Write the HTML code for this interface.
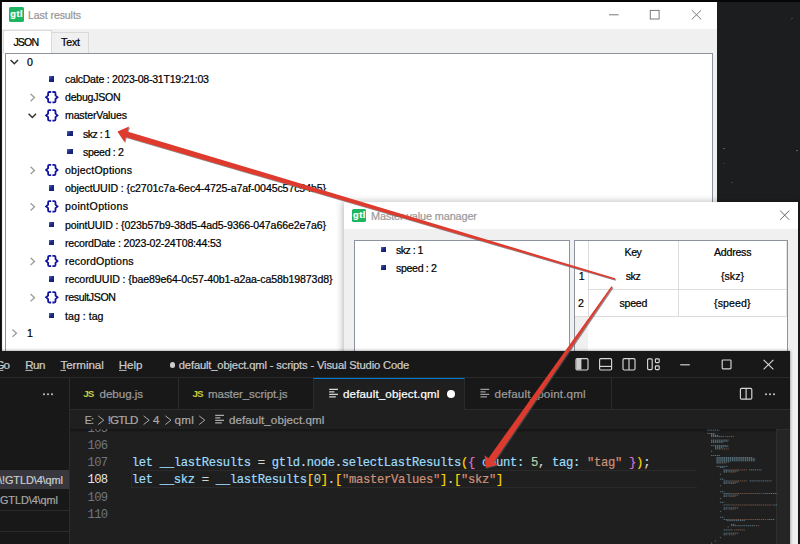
<!DOCTYPE html>
<html><head><meta charset="utf-8"><title>Last results</title>
<style>
html,body{margin:0;padding:0}
body{width:800px;height:544px;overflow:hidden;position:relative;background:#1b1d1e;font-family:"Liberation Sans",sans-serif}
div,span,i,svg{position:absolute;box-sizing:border-box}
.t{white-space:pre;line-height:16px;height:16px;-webkit-text-stroke:0.22px currentColor}
.br{font-weight:bold;color:#17178f;font-size:12px;letter-spacing:0.6px;line-height:16px}
.bu{width:5.4px;height:5.4px;background:linear-gradient(135deg,#5a6db8 0%,#1c2b85 45%,#101a6a 100%)}
.cl{left:131.7px;white-space:pre;font-family:"Liberation Mono",monospace;font-size:12.2px;letter-spacing:-0.31px;line-height:17px;height:17px;-webkit-text-stroke:0.2px currentColor}
.cl span{position:static}
.ln{left:83.2px;width:24.4px;text-align:right;font-family:"Liberation Mono",monospace;font-size:12.2px;letter-spacing:-0.6px;line-height:17px;height:17px;color:#6e7681}
.ln.cur{color:#e4e4e4}
</style></head><body>

<!-- wallpaper details -->
<div style="left:0;top:0;width:800px;height:1.6px;background:#060606"></div>
<div style="left:0;top:0;width:1.4px;height:360px;background:#0c0c0c"></div>
<div style="left:723px;top:148.2px;width:2.2px;height:1.2px;background:#6d6a45;border-radius:1px;transform:rotate(-20deg)"></div>
<div style="left:796px;top:150px;width:2.4px;height:1.2px;background:#77734a;border-radius:1px;transform:rotate(-20deg)"></div>
<div style="left:791.4px;top:18.2px;width:2.2px;height:1.1px;background:#4a4a4a;border-radius:1px;transform:rotate(-20deg)"></div>
<div style="left:730.6px;top:181.6px;width:2px;height:1.1px;background:#4a4a4a;border-radius:1px;transform:rotate(-20deg)"></div>
<div style="left:723px;top:163px;width:2px;height:1px;background:#3c3c3c;border-radius:1px;transform:rotate(-20deg)"></div>
<!-- ============ Last results window ============ -->
<div id="w1" style="left:2px;top:2px;width:715.4px;height:360px;background:#f0f0f0">
  <div style="left:0;top:0;width:100%;height:27.3px;background:#fff"></div>
  <div style="left:7.2px;top:5.2px;width:15.2px;height:14.6px;background:#1db560;border-radius:1.6px"></div>
  <!-- tabs -->
  <div style="left:49.4px;top:30.2px;width:37.4px;height:21px;background:#f0f0f0;border:1px solid #d9d9d9;border-bottom:none"></div>
  <div style="left:1px;top:28.2px;width:48.6px;height:24px;background:#fff;border:1px solid #d9d9d9;border-bottom:none"></div>
  <!-- pane -->
  <div style="left:2.6px;top:50.8px;width:708.8px;height:320px;background:#fff;border:1px solid #8d939e"></div>
  <div style="left:1px;top:51.8px;width:1.8px;height:320px;background:#fff"></div>
</div>

<!-- ============ Master value manager window ============ -->
<div id="w2" style="left:344px;top:202px;width:454px;height:360px;background:#f0f0f0;box-shadow:0 1px 7px 1px rgba(0,0,0,0.30)">
  <div style="left:0;top:0;width:100%;height:27.3px;background:#fff"></div>
  <div style="left:7.6px;top:6.6px;width:14.8px;height:13.8px;background:#1db560;border-radius:1.6px"></div>
  <div style="left:10.2px;top:37.8px;width:215.6px;height:140px;background:#fff;border:1px solid #8d939e"></div>
  <div style="left:230px;top:37.8px;width:214.4px;height:140px;background:#fff;border:1px solid #8d939e"></div>
  <!-- table grid -->
  <div style="left:231px;top:114.6px;width:13px;height:60px;background:#f0f0f0"></div>
  <div style="left:243.8px;top:38.8px;width:1px;height:76px;background:#dcdcdc"></div>
  <div style="left:334.4px;top:38.8px;width:1px;height:76px;background:#dcdcdc"></div>
  <div style="left:442.4px;top:38.8px;width:1px;height:76px;background:#e4e4e4"></div>
  <div style="left:244px;top:87.4px;width:199px;height:1px;background:#dcdcdc"></div>
  <div style="left:231px;top:113.8px;width:212px;height:1px;background:#dcdcdc"></div>
</div>

<!-- ============ VS Code window ============ -->
<div id="w3" style="left:-10px;top:350.8px;width:799.6px;height:200px;background:#1f1f1f;box-shadow:0 0 3px rgba(0,0,0,0.5)">
  <!-- title bar -->
  <div style="left:0;top:0;width:100%;height:26.9px;background:#181818;border-bottom:1px solid #2b2b2b"></div>
  <!-- side bar -->
  <div style="left:0;top:26.9px;width:80px;height:180px;background:#181818;border-right:1px solid #2b2b2b"></div>
  <div style="left:0;top:118.9px;width:79px;height:19.6px;background:#37373d"></div>
  <div style="left:0;top:159.2px;width:79px;height:1px;background:#2b2b2b"></div>
  <div style="left:0;top:180.4px;width:79px;height:1px;background:#2b2b2b"></div>
  <!-- tab strip -->
  <div style="left:80px;top:26.9px;width:719.6px;height:31.9px;background:#181818;border-bottom:1px solid #2b2b2b"></div>
  <div style="left:187.8px;top:26.9px;width:1px;height:31.5px;background:#2b2b2b"></div>
  <div style="left:322.6px;top:26.9px;width:152.8px;height:32.1px;background:#1f1f1f;border-left:1px solid #2b2b2b;border-right:1px solid #2b2b2b;border-top:1.2px solid #0078d4"></div>
  <div style="left:621.4px;top:26.9px;width:1px;height:31.5px;background:#2b2b2b"></div>
  <!-- current line -->
  <div style="left:141.4px;top:119.1px;width:566px;height:18.2px;border:1.2px solid #2a2a2a;border-right:none"></div>
  <!-- breadcrumb shadow -->
  <div style="left:80px;top:58.8px;width:706px;height:19.8px;background:#1f1f1f"></div>
  <div style="left:80px;top:78.6px;width:706px;height:3.4px;background:linear-gradient(#141414,rgba(31,31,31,0))"></div>
  <!-- scrollbar / minimap slider -->
  <div style="left:786.4px;top:78.4px;width:13.2px;height:130px;background:#252525;border-left:1px solid #2e2e2e;border-top:1px solid #2e2e2e"></div>
</div>
<!-- dirty dot + title dot -->
<div style="left:446.8px;top:390.2px;width:8px;height:8px;border-radius:50%;background:#fff"></div>
<div style="left:170.2px;top:362.4px;width:5.3px;height:5.3px;border-radius:50%;background:#ccc"></div>

<div class="ln" style="top:420.5px">105</div><div class="ln" style="top:437.8px">106</div><div class="ln" style="top:455.1px">107</div><div class="ln cur" style="top:472.4px">108</div><div class="ln" style="top:489.7px">109</div><div class="ln" style="top:507.0px">110</div>
<!-- hide overflow of line 105 under breadcrumb -->
<div style="left:70.5px;top:409.8px;width:60px;height:19.7px;background:#1f1f1f"></div>
<div class="cl" style="top:455.1px"><span style="color:#9cdcfe">let __lastResults </span><span style="color:#d4d4d4">= </span><span style="color:#9cdcfe">gtld</span><span style="color:#d4d4d4">.</span><span style="color:#9cdcfe">node</span><span style="color:#d4d4d4">.</span><span style="color:#9cdcfe">selectLastResults</span><span style="color:#ffd700">(</span><span style="color:#da70d6">{ </span><span style="color:#9cdcfe">count</span><span style="color:#9cdcfe">: </span><span style="color:#b5cea8">5</span><span style="color:#d4d4d4">, </span><span style="color:#9cdcfe">tag</span><span style="color:#9cdcfe">: </span><span style="color:#ce9178">"tag"</span><span style="color:#da70d6"> }</span><span style="color:#ffd700">)</span><span style="color:#d4d4d4">;</span></div><div class="cl" style="top:472.4px"><span style="color:#9cdcfe">let __skz </span><span style="color:#d4d4d4">= </span><span style="color:#9cdcfe">__lastResults</span><span style="color:#ffd700">[</span><span style="color:#b5cea8">0</span><span style="color:#ffd700">]</span><span style="color:#d4d4d4">.</span><span style="color:#ffd700">[</span><span style="color:#ce9178">"masterValues"</span><span style="color:#ffd700">]</span><span style="color:#d4d4d4">.</span><span style="color:#ffd700">[</span><span style="color:#ce9178">"skz"</span><span style="color:#ffd700">]</span></div>

<!-- text -->
<span class="t" style="left:28.00px;top:7.00px;font-size:10.50px;letter-spacing:-0.064px;color:#959595;font-family:'Liberation Sans', sans-serif;font-weight:normal;">Last results</span>
<span class="t" style="left:13.40px;top:33.70px;font-size:10.60px;letter-spacing:-0.822px;color:#000;font-family:'Liberation Sans', sans-serif;font-weight:normal;">JSON</span>
<span class="t" style="left:61.00px;top:34.40px;font-size:10.60px;letter-spacing:-0.146px;color:#000;font-family:'Liberation Sans', sans-serif;font-weight:normal;">Text</span>
<span class="t" style="left:27.00px;top:53.50px;font-size:10.60px;letter-spacing:0.000px;color:#000;font-family:'Liberation Sans', sans-serif;font-weight:normal;">0</span>
<span class="t" style="left:65.00px;top:71.30px;font-size:10.60px;letter-spacing:-0.274px;color:#000;font-family:'Liberation Sans', sans-serif;font-weight:normal;">calcDate : 2023-08-31T19:21:03</span>
<span class="t" style="left:65.00px;top:89.10px;font-size:10.60px;letter-spacing:-0.265px;color:#000;font-family:'Liberation Sans', sans-serif;font-weight:normal;">debugJSON</span>
<span class="t" style="left:65.00px;top:107.30px;font-size:10.60px;letter-spacing:-0.180px;color:#000;font-family:'Liberation Sans', sans-serif;font-weight:normal;">masterValues</span>
<span class="t" style="left:83.00px;top:125.50px;font-size:10.60px;letter-spacing:-0.537px;color:#000;font-family:'Liberation Sans', sans-serif;font-weight:normal;">skz : 1</span>
<span class="t" style="left:83.00px;top:143.80px;font-size:10.60px;letter-spacing:-0.324px;color:#000;font-family:'Liberation Sans', sans-serif;font-weight:normal;">speed : 2</span>
<span class="t" style="left:65.00px;top:161.90px;font-size:10.60px;letter-spacing:0.185px;color:#000;font-family:'Liberation Sans', sans-serif;font-weight:normal;">objectOptions</span>
<span class="t" style="left:65.00px;top:180.10px;font-size:10.60px;letter-spacing:-0.116px;color:#000;font-family:'Liberation Sans', sans-serif;font-weight:normal;">objectUUID : {c2701c7a-6ec4-4725-a7af-0045c57c54b5}</span>
<span class="t" style="left:65.00px;top:198.30px;font-size:10.60px;letter-spacing:0.320px;color:#000;font-family:'Liberation Sans', sans-serif;font-weight:normal;">pointOptions</span>
<span class="t" style="left:65.00px;top:216.50px;font-size:10.60px;letter-spacing:-0.131px;color:#000;font-family:'Liberation Sans', sans-serif;font-weight:normal;">pointUUID : {023b57b9-38d5-4ad5-9366-047a66e2e7a6}</span>
<span class="t" style="left:65.00px;top:234.70px;font-size:10.60px;letter-spacing:-0.214px;color:#000;font-family:'Liberation Sans', sans-serif;font-weight:normal;">recordDate : 2023-02-24T08:44:53</span>
<span class="t" style="left:65.00px;top:252.90px;font-size:10.60px;letter-spacing:0.163px;color:#000;font-family:'Liberation Sans', sans-serif;font-weight:normal;">recordOptions</span>
<span class="t" style="left:65.00px;top:271.10px;font-size:10.60px;letter-spacing:-0.116px;color:#000;font-family:'Liberation Sans', sans-serif;font-weight:normal;">recordUUID : {bae89e64-0c57-40b1-a2aa-ca58b19873d8}</span>
<span class="t" style="left:65.00px;top:289.20px;font-size:10.60px;letter-spacing:-0.352px;color:#000;font-family:'Liberation Sans', sans-serif;font-weight:normal;">resultJSON</span>
<span class="t" style="left:65.00px;top:307.50px;font-size:10.60px;letter-spacing:0.025px;color:#000;font-family:'Liberation Sans', sans-serif;font-weight:normal;">tag : tag</span>
<span class="t" style="left:27.00px;top:324.70px;font-size:10.60px;letter-spacing:0.000px;color:#000;font-family:'Liberation Sans', sans-serif;font-weight:normal;">1</span>
<span class="t" style="left:371.00px;top:207.60px;font-size:10.90px;letter-spacing:-0.124px;color:#9a9a9a;font-family:'Liberation Sans', sans-serif;font-weight:normal;">Master value manager</span>
<span class="t" style="left:396.00px;top:242.20px;font-size:10.60px;letter-spacing:-0.538px;color:#000;font-family:'Liberation Sans', sans-serif;font-weight:normal;">skz : 1</span>
<span class="t" style="left:396.00px;top:260.30px;font-size:10.60px;letter-spacing:-0.324px;color:#000;font-family:'Liberation Sans', sans-serif;font-weight:normal;">speed : 2</span>
<span class="t" style="left:624.60px;top:243.90px;font-size:10.60px;letter-spacing:-0.533px;color:#000;font-family:'Liberation Sans', sans-serif;font-weight:normal;">Key</span>
<span class="t" style="left:714.00px;top:243.90px;font-size:10.60px;letter-spacing:-0.229px;color:#000;font-family:'Liberation Sans', sans-serif;font-weight:normal;">Address</span>
<span class="t" style="left:578.70px;top:268.30px;font-size:10.60px;letter-spacing:0.000px;color:#000;font-family:'Liberation Sans', sans-serif;font-weight:normal;">1</span>
<span class="t" style="left:578.00px;top:295.00px;font-size:10.60px;letter-spacing:0.000px;color:#000;font-family:'Liberation Sans', sans-serif;font-weight:normal;">2</span>
<span class="t" style="left:625.70px;top:268.30px;font-size:10.60px;letter-spacing:-0.445px;color:#000;font-family:'Liberation Sans', sans-serif;font-weight:normal;">skz</span>
<span class="t" style="left:619.50px;top:295.00px;font-size:10.60px;letter-spacing:-0.269px;color:#000;font-family:'Liberation Sans', sans-serif;font-weight:normal;">speed</span>
<span class="t" style="left:721.00px;top:268.30px;font-size:10.60px;letter-spacing:0.008px;color:#000;font-family:'Liberation Sans', sans-serif;font-weight:normal;">{skz}</span>
<span class="t" style="left:714.00px;top:295.00px;font-size:10.60px;letter-spacing:0.108px;color:#000;font-family:'Liberation Sans', sans-serif;font-weight:normal;">{speed}</span>
<span class="t" style="left:-4.50px;top:357.00px;font-size:11.60px;letter-spacing:-0.900px;color:#cccccc;font-family:'Liberation Sans', sans-serif;font-weight:normal;">Go</span>
<span class="t" style="left:25.30px;top:357.00px;font-size:11.60px;letter-spacing:-0.591px;color:#cccccc;font-family:'Liberation Sans', sans-serif;font-weight:normal;">Run</span>
<span class="t" style="left:60.50px;top:357.00px;font-size:11.60px;letter-spacing:-0.087px;color:#cccccc;font-family:'Liberation Sans', sans-serif;font-weight:normal;">Terminal</span>
<span class="t" style="left:118.80px;top:357.00px;font-size:11.60px;letter-spacing:-0.053px;color:#cccccc;font-family:'Liberation Sans', sans-serif;font-weight:normal;">Help</span>
<span class="t" style="left:178.80px;top:357.00px;font-size:11.20px;letter-spacing:-0.156px;color:#cccccc;font-family:'Liberation Sans', sans-serif;font-weight:normal;">default_object.qml - scripts - Visual Studio Code</span>
<span class="t" style="left:99.60px;top:386.30px;font-size:11.60px;letter-spacing:-0.063px;color:#9d9d9d;font-family:'Liberation Sans', sans-serif;font-weight:normal;">debug.js</span>
<span class="t" style="left:208.00px;top:386.30px;font-size:11.60px;letter-spacing:-0.113px;color:#9d9d9d;font-family:'Liberation Sans', sans-serif;font-weight:normal;">master_script.js</span>
<span class="t" style="left:343.00px;top:386.30px;font-size:11.60px;letter-spacing:0.135px;color:#ffffff;font-family:'Liberation Sans', sans-serif;font-weight:normal;">default_object.qml</span>
<span class="t" style="left:494.60px;top:386.30px;font-size:11.60px;letter-spacing:0.168px;color:#9d9d9d;font-family:'Liberation Sans', sans-serif;font-weight:normal;">default_point.qml</span>
<span class="t" style="left:84.80px;top:412.00px;font-size:10.60px;letter-spacing:-0.816px;color:#a9a9a9;font-family:'Liberation Sans', sans-serif;font-weight:normal;">E:</span>
<span class="t" style="left:107.80px;top:412.00px;font-size:11.60px;letter-spacing:-0.900px;color:#a9a9a9;font-family:'Liberation Sans', sans-serif;font-weight:normal;">!GTLD</span>
<span class="t" style="left:153.00px;top:412.00px;font-size:11.60px;letter-spacing:0.000px;color:#a9a9a9;font-family:'Liberation Sans', sans-serif;font-weight:normal;">4</span>
<span class="t" style="left:174.40px;top:412.00px;font-size:11.60px;letter-spacing:0.356px;color:#a9a9a9;font-family:'Liberation Sans', sans-serif;font-weight:normal;">qml</span>
<span class="t" style="left:229.00px;top:412.00px;font-size:11.60px;letter-spacing:0.076px;color:#a9a9a9;font-family:'Liberation Sans', sans-serif;font-weight:normal;">default_object.qml</span>
<span class="t" style="left:-1.00px;top:472.10px;font-size:10.90px;letter-spacing:-0.070px;color:#cccccc;font-family:'Liberation Sans', sans-serif;font-weight:normal;">\!GTLD\4\qml</span>
<span class="t" style="left:-6.00px;top:491.70px;font-size:10.90px;letter-spacing:-0.070px;color:#a6a6a6;font-family:'Liberation Sans', sans-serif;font-weight:normal;">\!GTLD\4\qml</span>
<span class="t" style="left:83.20px;top:385.70px;font-size:9.80px;letter-spacing:-0.900px;color:#cbcb41;font-family:'Liberation Sans', sans-serif;font-weight:bold;-webkit-text-stroke:0">JS</span>
<span class="t" style="left:192.40px;top:385.70px;font-size:9.80px;letter-spacing:-0.900px;color:#cbcb41;font-family:'Liberation Sans', sans-serif;font-weight:bold;-webkit-text-stroke:0">JS</span>

<i class="bu" style="left:48.9px;top:76.4px"></i><i class="bu" style="left:48.9px;top:185.2px"></i><i class="bu" style="left:48.9px;top:221.6px"></i><i class="bu" style="left:48.9px;top:239.8px"></i><i class="bu" style="left:48.9px;top:276.2px"></i><i class="bu" style="left:48.9px;top:312.6px"></i><i class="bu" style="left:67.3px;top:130.6px"></i><i class="bu" style="left:67.3px;top:148.9px"></i><i class="bu" style="left:381px;top:246.8px"></i><i class="bu" style="left:381px;top:264.9px"></i>
<span class="t" style="left:10.3px;top:8.1px;font-size:9.2px;font-weight:bold;color:#fff;letter-spacing:0.5px;line-height:12px;height:12px">gtl</span>
<span class="t" style="left:353.1px;top:209.3px;font-size:9.2px;font-weight:bold;color:#fff;letter-spacing:0.5px;line-height:12px;height:12px">gtl</span>

<!-- vector overlay: icons + arrows -->
<svg width="800" height="544" viewBox="0 0 800 544" style="left:0;top:0">
  <defs><filter id="ds" x="-5%" y="-5%" width="110%" height="110%"><feDropShadow dx="0.8" dy="1.0" stdDeviation="0.45" flood-color="#585858" flood-opacity="0.75"/></filter></defs>
  <polyline points="10.6,59.9 14.3,63.7 18.0,59.9" fill="none" stroke="#333333" stroke-width="1.5"/><polyline points="12.5,329.6 16.4,333.2 12.5,336.8" fill="none" stroke="#9c9c9c" stroke-width="1.3"/><polyline points="30.6,94.0 34.5,97.6 30.6,101.2" fill="none" stroke="#9c9c9c" stroke-width="1.3"/><path d="M51.2,92.0 H49.4 Q48.1,92.0 48.1,93.2 V95.4 L46.1,97.2 L48.1,99.0 V101.2 Q48.1,102.4 49.4,102.4 H51.2" fill="none" stroke="#1212a2" stroke-width="1.8"/><path d="M52.4,92.0 H54.2 Q55.5,92.0 55.5,93.2 V95.4 L57.5,97.2 L55.5,99.0 V101.2 Q55.5,102.4 54.2,102.4 H52.4" fill="none" stroke="#1212a2" stroke-width="1.8"/><polyline points="28.6,113.7 32.3,117.5 36.0,113.7" fill="none" stroke="#333333" stroke-width="1.5"/><path d="M51.2,110.2 H49.4 Q48.1,110.2 48.1,111.4 V113.6 L46.1,115.4 L48.1,117.2 V119.4 Q48.1,120.6 49.4,120.6 H51.2" fill="none" stroke="#1212a2" stroke-width="1.8"/><path d="M52.4,110.2 H54.2 Q55.5,110.2 55.5,111.4 V113.6 L57.5,115.4 L55.5,117.2 V119.4 Q55.5,120.6 54.2,120.6 H52.4" fill="none" stroke="#1212a2" stroke-width="1.8"/><polyline points="30.6,166.8 34.5,170.4 30.6,174.0" fill="none" stroke="#9c9c9c" stroke-width="1.3"/><path d="M51.2,164.8 H49.4 Q48.1,164.8 48.1,166.0 V168.2 L46.1,170.0 L48.1,171.8 V174.0 Q48.1,175.2 49.4,175.2 H51.2" fill="none" stroke="#1212a2" stroke-width="1.8"/><path d="M52.4,164.8 H54.2 Q55.5,164.8 55.5,166.0 V168.2 L57.5,170.0 L55.5,171.8 V174.0 Q55.5,175.2 54.2,175.2 H52.4" fill="none" stroke="#1212a2" stroke-width="1.8"/><polyline points="30.6,203.2 34.5,206.8 30.6,210.4" fill="none" stroke="#9c9c9c" stroke-width="1.3"/><path d="M51.2,201.2 H49.4 Q48.1,201.2 48.1,202.4 V204.6 L46.1,206.4 L48.1,208.2 V210.4 Q48.1,211.6 49.4,211.6 H51.2" fill="none" stroke="#1212a2" stroke-width="1.8"/><path d="M52.4,201.2 H54.2 Q55.5,201.2 55.5,202.4 V204.6 L57.5,206.4 L55.5,208.2 V210.4 Q55.5,211.6 54.2,211.6 H52.4" fill="none" stroke="#1212a2" stroke-width="1.8"/><polyline points="30.6,257.8 34.5,261.4 30.6,265.0" fill="none" stroke="#9c9c9c" stroke-width="1.3"/><path d="M51.2,255.8 H49.4 Q48.1,255.8 48.1,257.0 V259.2 L46.1,261.0 L48.1,262.8 V265.0 Q48.1,266.2 49.4,266.2 H51.2" fill="none" stroke="#1212a2" stroke-width="1.8"/><path d="M52.4,255.8 H54.2 Q55.5,255.8 55.5,257.0 V259.2 L57.5,261.0 L55.5,262.8 V265.0 Q55.5,266.2 54.2,266.2 H52.4" fill="none" stroke="#1212a2" stroke-width="1.8"/><polyline points="30.6,294.1 34.5,297.7 30.6,301.3" fill="none" stroke="#9c9c9c" stroke-width="1.3"/><path d="M51.2,292.1 H49.4 Q48.1,292.1 48.1,293.3 V295.5 L46.1,297.3 L48.1,299.1 V301.3 Q48.1,302.5 49.4,302.5 H51.2" fill="none" stroke="#1212a2" stroke-width="1.8"/><path d="M52.4,292.1 H54.2 Q55.5,292.1 55.5,293.3 V295.5 L57.5,297.3 L55.5,299.1 V301.3 Q55.5,302.5 54.2,302.5 H52.4" fill="none" stroke="#1212a2" stroke-width="1.8"/>
  <!-- window 1 controls -->
  <g stroke="#7a7a7a" stroke-width="1" fill="none">
    <line x1="609" y1="14.8" x2="618.6" y2="14.8"/>
    <rect x="650.3" y="10.4" width="8.8" height="8.6"/>
    <path d="M691.8 10.2 L701.2 19.4 M701.2 10.2 L691.8 19.4"/>
    <path d="M780.2 210.6 L789.2 219.8 M789.2 210.6 L780.2 219.8" stroke="#6a6a6a"/>
  </g>
  <!-- vscode title icons -->
  <g stroke="#d6d6d6" stroke-width="1.15" fill="none">
    <rect x="576" y="358.6" width="12" height="11.4" rx="1.2"/><rect x="576.4" y="359" width="5" height="10.6" fill="#cccccc" stroke="none"/>
    <rect x="599.6" y="358.6" width="12" height="11.4" rx="1.2"/><line x1="599.6" y1="366.4" x2="611.6" y2="366.4"/>
    <rect x="623" y="358.6" width="12" height="11.4" rx="1.2"/><line x1="629" y1="358.6" x2="629" y2="370"/>
    <rect x="647.6" y="358.8" width="4.6" height="10.8" rx="1"/><rect x="655.4" y="358.8" width="3.8" height="3.8" rx="0.8"/><rect x="655.4" y="365.8" width="3.8" height="3.8" rx="0.8"/>
    <line x1="680.2" y1="364.8" x2="689.8" y2="364.8"/>
    <rect x="722.2" y="360" width="8.8" height="8.8" rx="0.8"/>
    <path d="M763.6 359.8 L773.4 369.4 M773.4 359.8 L763.6 369.4"/>
    <rect x="740.4" y="388.4" width="11.4" height="10.8" rx="1.2"/><line x1="746.1" y1="388.4" x2="746.1" y2="399.2"/>
  </g>
  <g fill="#cccccc">
    <circle cx="766" cy="394.2" r="1"/><circle cx="770" cy="394.2" r="1"/><circle cx="774" cy="394.2" r="1"/>
    <circle cx="44" cy="394.2" r="1"/><circle cx="48" cy="394.2" r="1"/><circle cx="52" cy="394.2" r="1"/>
  </g>
  <!-- file icons -->
  <g stroke-width="1.3" fill="none">
    <path d="M329.2 389.4h8.8M329.2 391.9h5.2M329.2 394.4h8.8M329.2 396.9h6.6" stroke="#d8d8d8"/>
    <path d="M480.4 389.4h8.8M480.4 391.9h5.2M480.4 394.4h8.8M480.4 396.9h6.6" stroke="#9a9a9a"/>
    <path d="M215.2 415.4h8.8M215.2 417.9h5.2M215.2 420.4h8.8M215.2 422.9h6.6" stroke="#a9a9a9"/>
  </g>
  <!-- breadcrumb chevrons -->
  <g stroke="#a9a9a9" stroke-width="1" fill="none">
    <polyline points="98.2,415.9 103.8,420.2 98.2,424.5"/>
    <polyline points="143.6,415.9 149.2,420.2 143.6,424.5"/>
    <polyline points="165.4,415.9 171.0,420.2 165.4,424.5"/>
    <polyline points="199.2,415.9 204.8,420.2 199.2,424.5"/>
  </g>
  <!-- menu mnemonics underline -->
  <g stroke="#cccccc" stroke-width="0.9">
    <line x1="-4" y1="370.4" x2="3.4" y2="370.4"/><line x1="25.4" y1="370.4" x2="32.6" y2="370.4"/><line x1="60.4" y1="370.4" x2="66" y2="370.4"/><line x1="119" y1="370.4" x2="126.6" y2="370.4"/>
  </g>
  <!-- minimap -->
  <line x1="707.3" y1="430.18" x2="719.4" y2="430.18" stroke="#8fc4e0" stroke-width="0.9" stroke-dasharray="1.3 0.6" opacity="0.55"/><line x1="707.3" y1="433.49" x2="715.0" y2="433.49" stroke="#8fc4e0" stroke-width="0.9" stroke-dasharray="1.3 0.6" opacity="0.55"/><line x1="711.0" y1="434.37" x2="715.4" y2="434.37" stroke="#8fc4e0" stroke-width="0.9" stroke-dasharray="1.3 0.6" opacity="0.55"/><line x1="711.0" y1="435.47" x2="718.8" y2="435.47" stroke="#8fc4e0" stroke-width="0.9" stroke-dasharray="1.3 0.6" opacity="0.55"/><line x1="711.0" y1="436.57" x2="724.3" y2="436.57" stroke="#8fc4e0" stroke-width="0.9" stroke-dasharray="1.3 0.6" opacity="0.55"/><line x1="725.1" y1="436.57" x2="734.2" y2="436.57" stroke="#c48a70" stroke-width="0.9" stroke-dasharray="1.3 0.6" opacity="0.55"/><line x1="711.0" y1="440.10" x2="728.7" y2="440.10" stroke="#8fc4e0" stroke-width="0.9" stroke-dasharray="1.3 0.6" opacity="0.55"/><line x1="711.0" y1="441.21" x2="728.2" y2="441.21" stroke="#8fc4e0" stroke-width="0.9" stroke-dasharray="1.3 0.6" opacity="0.55"/><line x1="711.0" y1="442.31" x2="723.2" y2="442.31" stroke="#8fc4e0" stroke-width="0.9" stroke-dasharray="1.3 0.6" opacity="0.55"/><line x1="711.0" y1="445.62" x2="727.6" y2="445.62" stroke="#8fc4e0" stroke-width="0.9" stroke-dasharray="1.3 0.6" opacity="0.55"/><line x1="715.0" y1="446.72" x2="728.7" y2="446.72" stroke="#8fc4e0" stroke-width="0.9" stroke-dasharray="1.3 0.6" opacity="0.55"/><line x1="715.0" y1="447.83" x2="723.2" y2="447.83" stroke="#8fc4e0" stroke-width="0.9" stroke-dasharray="1.3 0.6" opacity="0.55"/><line x1="715.0" y1="448.93" x2="721.0" y2="448.93" stroke="#8fc4e0" stroke-width="0.9" stroke-dasharray="1.3 0.6" opacity="0.55"/><line x1="721.8" y1="448.93" x2="728.7" y2="448.93" stroke="#c48a70" stroke-width="0.9" stroke-dasharray="1.3 0.6" opacity="0.55"/><line x1="711.0" y1="451.13" x2="712.1" y2="451.13" stroke="#b8b8b8" stroke-width="0.9" stroke-dasharray="1.3 0.6" opacity="0.55"/><line x1="711.0" y1="455.55" x2="719.9" y2="455.55" stroke="#8fc4e0" stroke-width="0.9" stroke-dasharray="1.3 0.6" opacity="0.55"/><line x1="716.5" y1="457.53" x2="752.9" y2="457.53" stroke="#8fc4e0" stroke-width="0.9" stroke-dasharray="1.3 0.6" opacity="0.55"/><line x1="716.5" y1="458.63" x2="755.2" y2="458.63" stroke="#8fc4e0" stroke-width="0.9" stroke-dasharray="1.3 0.6" opacity="0.55"/><line x1="716.5" y1="459.74" x2="755.2" y2="459.74" stroke="#8fc4e0" stroke-width="0.9" stroke-dasharray="1.3 0.6" opacity="0.55"/><line x1="716.5" y1="460.84" x2="755.2" y2="460.84" stroke="#8fc4e0" stroke-width="0.9" stroke-dasharray="1.3 0.6" opacity="0.55"/><line x1="716.5" y1="461.94" x2="729.8" y2="461.94" stroke="#8fc4e0" stroke-width="0.9" stroke-dasharray="1.3 0.6" opacity="0.55"/><line x1="716.5" y1="463.05" x2="721.0" y2="463.05" stroke="#8fc4e0" stroke-width="0.9" stroke-dasharray="1.3 0.6" opacity="0.55"/><line x1="721.6" y1="463.05" x2="726.0" y2="463.05" stroke="#c48a70" stroke-width="0.9" stroke-dasharray="1.3 0.6" opacity="0.55"/><line x1="716.5" y1="466.36" x2="727.6" y2="466.36" stroke="#8fc4e0" stroke-width="0.9" stroke-dasharray="1.3 0.6" opacity="0.55"/><line x1="719.9" y1="467.46" x2="724.3" y2="467.46" stroke="#8fc4e0" stroke-width="0.9" stroke-dasharray="1.3 0.6" opacity="0.55"/><line x1="723.6" y1="469.89" x2="729.8" y2="469.89" stroke="#8fc4e0" stroke-width="0.9" stroke-dasharray="1.3 0.6" opacity="0.55"/><line x1="730.4" y1="469.89" x2="747.4" y2="469.89" stroke="#c48a70" stroke-width="0.9" stroke-dasharray="1.3 0.6" opacity="0.55"/><line x1="749.0" y1="469.89" x2="761.8" y2="469.89" stroke="#8fc4e0" stroke-width="0.9" stroke-dasharray="1.3 0.6" opacity="0.55"/><line x1="723.6" y1="470.99" x2="738.6" y2="470.99" stroke="#8fc4e0" stroke-width="0.9" stroke-dasharray="1.3 0.6" opacity="0.55"/><line x1="723.6" y1="472.09" x2="727.6" y2="472.09" stroke="#8fc4e0" stroke-width="0.9" stroke-dasharray="1.3 0.6" opacity="0.55"/><line x1="728.7" y1="472.09" x2="735.3" y2="472.09" stroke="#c48a70" stroke-width="0.9" stroke-dasharray="1.3 0.6" opacity="0.55"/><line x1="719.9" y1="474.30" x2="721.0" y2="474.30" stroke="#b8b8b8" stroke-width="0.9" stroke-dasharray="1.3 0.6" opacity="0.55"/><line x1="719.9" y1="479.15" x2="724.3" y2="479.15" stroke="#8fc4e0" stroke-width="0.9" stroke-dasharray="1.3 0.6" opacity="0.55"/><line x1="723.6" y1="480.92" x2="729.8" y2="480.92" stroke="#8fc4e0" stroke-width="0.9" stroke-dasharray="1.3 0.6" opacity="0.55"/><line x1="730.4" y1="480.92" x2="747.4" y2="480.92" stroke="#c48a70" stroke-width="0.9" stroke-dasharray="1.3 0.6" opacity="0.55"/><line x1="749.6" y1="480.92" x2="771.7" y2="480.92" stroke="#8fc4e0" stroke-width="0.9" stroke-dasharray="1.3 0.6" opacity="0.55"/><line x1="723.6" y1="482.24" x2="738.6" y2="482.24" stroke="#8fc4e0" stroke-width="0.9" stroke-dasharray="1.3 0.6" opacity="0.55"/><line x1="723.6" y1="483.56" x2="727.6" y2="483.56" stroke="#8fc4e0" stroke-width="0.9" stroke-dasharray="1.3 0.6" opacity="0.55"/><line x1="728.7" y1="483.56" x2="735.3" y2="483.56" stroke="#c48a70" stroke-width="0.9" stroke-dasharray="1.3 0.6" opacity="0.55"/><line x1="719.9" y1="485.77" x2="721.0" y2="485.77" stroke="#b8b8b8" stroke-width="0.9" stroke-dasharray="1.3 0.6" opacity="0.55"/><line x1="719.9" y1="491.73" x2="724.3" y2="491.73" stroke="#8fc4e0" stroke-width="0.9" stroke-dasharray="1.3 0.6" opacity="0.55"/><line x1="723.6" y1="493.49" x2="729.8" y2="493.49" stroke="#8fc4e0" stroke-width="0.9" stroke-dasharray="1.3 0.6" opacity="0.55"/><line x1="730.4" y1="493.49" x2="761.8" y2="493.49" stroke="#c48a70" stroke-width="0.9" stroke-dasharray="1.3 0.6" opacity="0.55"/><line x1="763.3" y1="493.49" x2="777.2" y2="493.49" stroke="#8fc4e0" stroke-width="0.9" stroke-dasharray="1.3 0.6" opacity="0.55"/><line x1="723.6" y1="495.03" x2="738.6" y2="495.03" stroke="#8fc4e0" stroke-width="0.9" stroke-dasharray="1.3 0.6" opacity="0.55"/><line x1="723.6" y1="496.36" x2="727.6" y2="496.36" stroke="#8fc4e0" stroke-width="0.9" stroke-dasharray="1.3 0.6" opacity="0.55"/><line x1="728.7" y1="496.36" x2="735.3" y2="496.36" stroke="#c48a70" stroke-width="0.9" stroke-dasharray="1.3 0.6" opacity="0.55"/><line x1="719.9" y1="498.56" x2="721.0" y2="498.56" stroke="#b8b8b8" stroke-width="0.9" stroke-dasharray="1.3 0.6" opacity="0.55"/><line x1="719.9" y1="502.31" x2="724.3" y2="502.31" stroke="#8fc4e0" stroke-width="0.9" stroke-dasharray="1.3 0.6" opacity="0.55"/><line x1="723.6" y1="504.96" x2="729.8" y2="504.96" stroke="#8fc4e0" stroke-width="0.9" stroke-dasharray="1.3 0.6" opacity="0.55"/><line x1="730.4" y1="504.96" x2="772.8" y2="504.96" stroke="#c48a70" stroke-width="0.9" stroke-dasharray="1.3 0.6" opacity="0.55"/><line x1="773.7" y1="504.96" x2="777.2" y2="504.96" stroke="#8fc4e0" stroke-width="0.9" stroke-dasharray="1.3 0.6" opacity="0.55"/><line x1="723.6" y1="507.83" x2="738.6" y2="507.83" stroke="#8fc4e0" stroke-width="0.9" stroke-dasharray="1.3 0.6" opacity="0.55"/><line x1="723.6" y1="509.15" x2="727.6" y2="509.15" stroke="#8fc4e0" stroke-width="0.9" stroke-dasharray="1.3 0.6" opacity="0.55"/><line x1="728.7" y1="509.15" x2="735.3" y2="509.15" stroke="#c48a70" stroke-width="0.9" stroke-dasharray="1.3 0.6" opacity="0.55"/><line x1="719.9" y1="511.58" x2="721.0" y2="511.58" stroke="#b8b8b8" stroke-width="0.9" stroke-dasharray="1.3 0.6" opacity="0.55"/><line x1="719.9" y1="517.32" x2="724.3" y2="517.32" stroke="#8fc4e0" stroke-width="0.9" stroke-dasharray="1.3 0.6" opacity="0.55"/><line x1="723.6" y1="519.52" x2="729.8" y2="519.52" stroke="#8fc4e0" stroke-width="0.9" stroke-dasharray="1.3 0.6" opacity="0.55"/><line x1="730.4" y1="519.52" x2="766.2" y2="519.52" stroke="#c48a70" stroke-width="0.9" stroke-dasharray="1.3 0.6" opacity="0.55"/><line x1="767.3" y1="519.52" x2="775.0" y2="519.52" stroke="#8fc4e0" stroke-width="0.9" stroke-dasharray="1.3 0.6" opacity="0.55"/><line x1="726.5" y1="520.62" x2="745.2" y2="520.62" stroke="#8fc4e0" stroke-width="0.9" stroke-dasharray="1.3 0.6" opacity="0.55"/><line x1="730.9" y1="524.38" x2="735.3" y2="524.38" stroke="#8fc4e0" stroke-width="0.9" stroke-dasharray="1.3 0.6" opacity="0.55"/><line x1="730.9" y1="525.70" x2="755.2" y2="525.70" stroke="#8fc4e0" stroke-width="0.9" stroke-dasharray="1.3 0.6" opacity="0.55"/><line x1="756.0" y1="525.70" x2="759.6" y2="525.70" stroke="#c48a70" stroke-width="0.9" stroke-dasharray="1.3 0.6" opacity="0.55"/><line x1="727.6" y1="527.02" x2="728.7" y2="527.02" stroke="#b8b8b8" stroke-width="0.9" stroke-dasharray="1.3 0.6" opacity="0.55"/><line x1="723.6" y1="529.89" x2="733.1" y2="529.89" stroke="#8fc4e0" stroke-width="0.9" stroke-dasharray="1.3 0.6" opacity="0.55"/><line x1="734.0" y1="529.89" x2="745.2" y2="529.89" stroke="#c48a70" stroke-width="0.9" stroke-dasharray="1.3 0.6" opacity="0.55"/><line x1="723.6" y1="533.20" x2="738.6" y2="533.20" stroke="#8fc4e0" stroke-width="0.9" stroke-dasharray="1.3 0.6" opacity="0.55"/><line x1="723.6" y1="534.74" x2="727.6" y2="534.74" stroke="#8fc4e0" stroke-width="0.9" stroke-dasharray="1.3 0.6" opacity="0.55"/><line x1="728.7" y1="534.74" x2="735.3" y2="534.74" stroke="#c48a70" stroke-width="0.9" stroke-dasharray="1.3 0.6" opacity="0.55"/><line x1="719.9" y1="537.61" x2="721.0" y2="537.61" stroke="#b8b8b8" stroke-width="0.9" stroke-dasharray="1.3 0.6" opacity="0.55"/><line x1="715.0" y1="540.92" x2="716.1" y2="540.92" stroke="#b8b8b8" stroke-width="0.9" stroke-dasharray="1.3 0.6" opacity="0.55"/><line x1="711.0" y1="543.13" x2="712.1" y2="543.13" stroke="#b8b8b8" stroke-width="0.9" stroke-dasharray="1.3 0.6" opacity="0.55"/>
  <!-- arrows -->
  <g fill="#de3a2e" filter="url(#ds)">
    <polygon points="117.5,131.5 129.1,126.6 127.3,131.4 615.2,278.3 614.8,279.7 125.7,137.0 124.5,141.9"/>
    <polygon points="485.7,467.8 484.7,455.3 488.4,458.2 611.4,286.2 612.6,287.0 493.8,462.0 497.8,464.4"/>
  </g>
</svg>
<!-- right strip: master window visible right of vscode -->
</body></html>
